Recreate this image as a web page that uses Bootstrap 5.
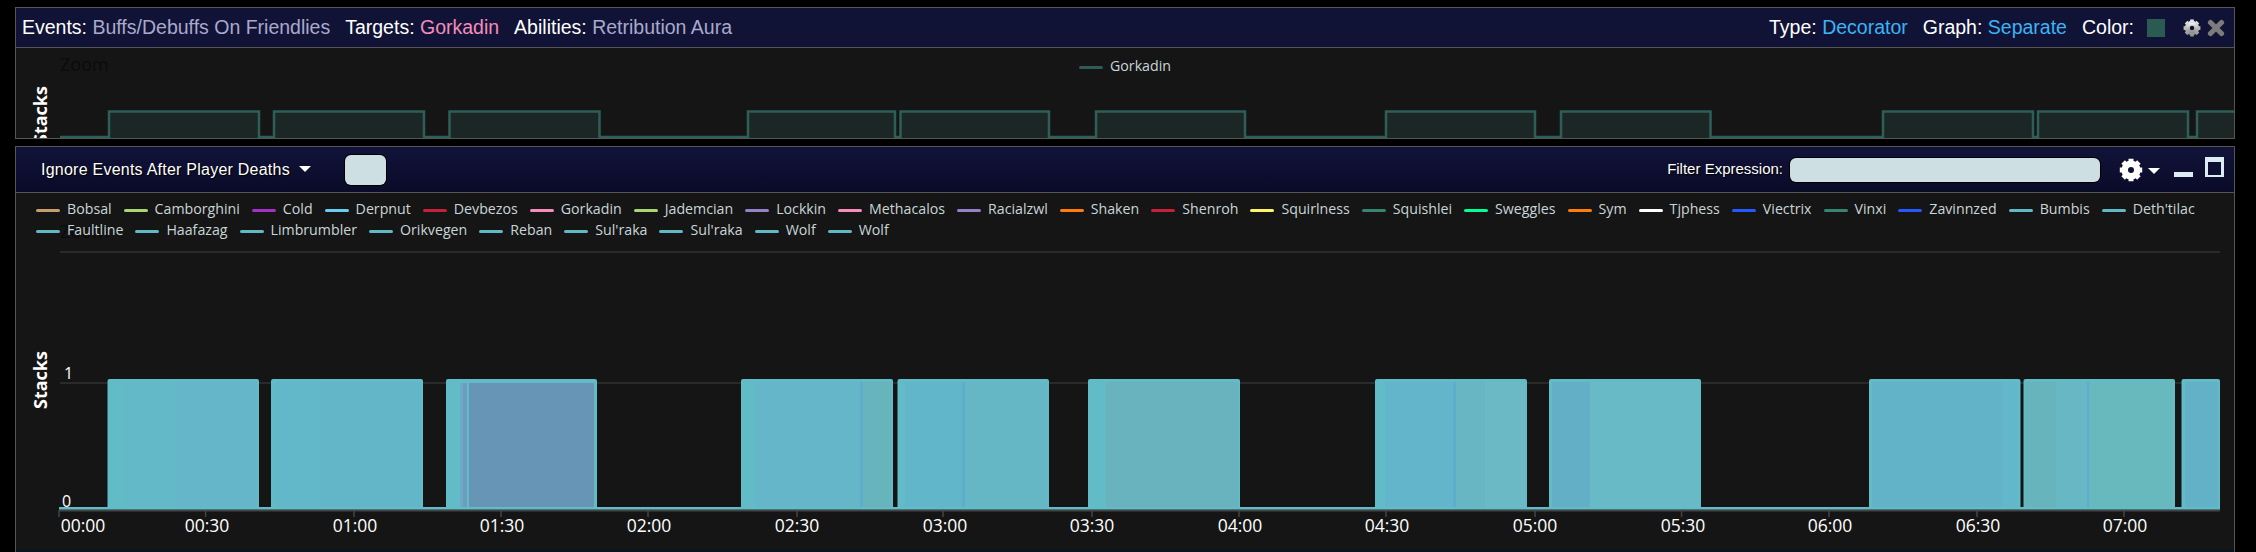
<!doctype html>
<html lang="en">
<head>
<meta charset="utf-8">
<title>Events</title>
<link rel="stylesheet" href="https://cdn.jsdelivr.net/npm/bootstrap@5.3.0/dist/css/bootstrap.min.css">
<style>
html,body{height:552px;overflow:hidden}
body{background:#000;color:#fff;font-family:"Liberation Sans",Arial,sans-serif;padding:7px 21px 0 15px}
.pane{border:1px solid #555;background:#151515;border-radius:0}
.pane + .pane{margin-top:7px;border-bottom:0}
.pane-head{background:#111336;border-bottom:1px solid #555;height:40px;padding:0 9px 0 6px;font-size:19.5px}
.pane-head2{background:linear-gradient(#11133a,#0a0b28);height:46px;padding:0 10px 0 0;font-size:16px}
.group{margin-right:15px}
.val{color:#a9a9cc}
.val-pink{color:#f58cba}
.val-blue{color:#3bb3f5}
.swatch{width:18px;height:18px;background:#2a5a52;margin:0 18px 0 13px}
.drop{color:#fff;font-size:16px;border:0;padding:0;margin-left:25px;text-shadow:1px 1px 1px #000;border-radius:0;letter-spacing:.24px}
.drop:hover{color:#fff}
.drop::after{margin-left:9px;vertical-align:.15em;border-top-width:6px;border-right-width:6px;border-left-width:6px}
.blank-btn{width:41px;height:30px;background:#cddfe2;border-radius:6px;margin-left:34px;box-shadow:0 0 0 1px #000}
.filter-label{font-size:15px;margin-right:7px;text-shadow:1px 1px 1px #000}
.filter-box{width:310px;height:24px;background:#cddfe2;border-radius:6px;box-shadow:0 0 0 1px #000}
.tool{display:block}
.tool-x{margin-left:6px}
.tool-gap1{margin-left:19px}
.tool-gap2{margin-left:14px}
.tool-gap3{margin-left:12px;margin-bottom:5px}
.care{width:0;height:0;border-left:6px solid transparent;border-right:6px solid transparent;border-top:6px solid #fff;margin-left:5px;margin-top:2px}
.plot{position:relative;overflow:hidden}
.plot svg{display:block}
.plot1{height:90px}
.plot2{height:357px}
.legend-box{position:absolute;left:20px;top:6px;width:2190px;column-gap:12px;row-gap:1px;font:14.2px/20px "Open Sans",sans-serif;color:#c9d5d8}
.legend-top{position:absolute;left:1063px;top:8px;font:14.2px/20px "Open Sans",sans-serif;color:#c9d5d8}
.leg{white-space:nowrap;display:flex;align-items:center}
.dash{display:block;width:24px;height:3px;border-radius:2px;margin-right:7px;margin-top:3px}
.c-war{background:#c79c6e}.c-dru{background:#abd473}.c-dk{background:#a330c9}.c-mag{background:#69ccf0}
.c-red{background:#c41f3b}.c-pal{background:#f58cba}.c-loc{background:#9482c9}.c-org{background:#ff7d0a}
.c-yel{background:#fff569}.c-sea{background:#358570}.c-grn{background:#00ff96}.c-wht{background:#fff}
.c-blu{background:#2459ff}.c-tea{background:#62b9c6}.c-dec{background:#2f5a55}
.axis{font:17.5px "Open Sans",sans-serif;fill:#fff}
.ylab{font:16px "Open Sans",sans-serif;fill:#fff}
.ttl{font:700 18px "Open Sans",sans-serif;fill:#fff}
.zoomword{font:18px "Open Sans",sans-serif;fill:#0b0b0b}
.tail{height:2px;background:#07151e}
</style>
</head>
<body>
<svg width="0" height="0" class="position-absolute">
  <defs>
    <linearGradient id="gy" x1="0" y1="0" x2="0" y2="1"><stop offset="0" stop-color="#eee"/><stop offset="1" stop-color="#8c8c8c"/></linearGradient>
    <linearGradient id="gx" x1="0" y1="0" x2="0" y2="1"><stop offset="0" stop-color="#8a8a8a"/><stop offset="1" stop-color="#5c5c5c"/></linearGradient>
    <g id="gearshape">
      <circle cx="12" cy="12" r="6.3" fill="none" stroke-width="6.6"/>
      <g stroke-width="5" stroke-linecap="butt">
        <path d="M12 .8V5M12 19v4.200M.8 12H5M19 12h4.200M4.100 4.100l3 3M16.900 16.900l3 3M19.900 4.100l-3 3M7.100 16.900l-3 3"/>
      </g>
    </g>
  </defs>
</svg>

<section class="card pane">
  <div class="pane-head d-flex align-items-center justify-content-between">
    <div class="d-flex">
      <span class="group">Events: <span class="val">Buffs/Debuffs On Friendlies</span></span>
      <span class="group">Targets: <span class="val-pink">Gorkadin</span></span>
      <span class="group">Abilities: <span class="val">Retribution Aura</span></span>
    </div>
    <div class="d-flex align-items-center">
      <span class="group">Type: <span class="val-blue">Decorator</span></span>
      <span class="group">Graph: <span class="val-blue">Separate</span></span>
      <span>Color:</span>
      <span class="swatch"></span>
      <svg class="tool" width="18" height="18" viewBox="0 0 24 24"><use href="#gearshape" stroke="url(#gy)"/></svg>
      <svg class="tool tool-x" width="18" height="18" viewBox="0 0 18 18"><path d="M3.500 3.500l11 11M14.500 3.500l-11 11" stroke="#7c7c7c" stroke-width="5.200" stroke-linecap="round" fill="none"/></svg>
    </div>
  </div>
  <div class="plot plot1">
    <svg width="2218" height="90" viewBox="16 48 2218 90">
      <path fill="#1c2625" d="M109 112h150v28H109zM274 112h150v28H274zM449 112h151v28H449zM748 112h147v28H748zM900 112h149v28H900zM1096 112h149v28h-149zM1386 112h149v28h-149zM1561 112h150v28h-150zM1883 112h150v28h-150zM2038 112h150v28h-150zM2197 112h37v28h-37z"/>
      <path fill="none" stroke="#2d5f59" stroke-width="2.500" d="M60 137H109V111.500H259V137H274V111.500H424V137H449.500V111.500H599.500V137H748V111.500H895V137H900.500V111.500H1049V137H1096V111.500H1245V137H1386V111.500H1535V137H1561V111.500H1710.500V137H1883V111.500H2033V137H2038V111.500H2188V137H2197V111.500H2234"/>
      <text class="zoomword" x="60" y="71">Zoom</text>
      <text class="ttl" transform="translate(47 115) rotate(-90)" text-anchor="middle">Stacks</text>
    </svg>
    <div class="legend-top leg"><span class="dash c-dec"></span>Gorkadin</div>
  </div>
</section>

<section class="card pane">
  <div class="pane-head pane-head2 d-flex align-items-center justify-content-between">
    <div class="d-flex align-items-center">
      <button type="button" class="btn drop dropdown-toggle">Ignore Events After Player Deaths</button>
      <span class="blank-btn"></span>
    </div>
    <div class="d-flex align-items-center">
      <span class="filter-label">Filter Expression:</span>
      <span class="filter-box"></span>
      <svg class="tool tool-gap1" width="24" height="24" viewBox="0 0 24 24"><use href="#gearshape" stroke="#fff"/></svg>
      <span class="care"></span>
      <svg class="tool tool-gap2" width="19" height="14" viewBox="0 0 19 14"><rect y="9" width="19" height="5" fill="#dcecf2"/></svg>
      <svg class="tool tool-gap3" width="19" height="20" viewBox="0 0 19 20"><path fill-rule="evenodd" fill="#dcecf2" d="M0 0h19v20H0zM3 5v13h13V5z"/></svg>
    </div>
  </div>
  <div class="plot plot2">
    <svg width="2218" height="357" viewBox="16 193 2218 357">
      <path stroke="#2a2a2a" stroke-width="2" d="M60 252H2220M60 383H2220"/>
      <path stroke="#444" stroke-width="2" d="M59 510.500H2220"/>
      <path stroke="#444" stroke-width="1.500" d="M59 510V517M205.600 510V517M354 510V517M501 510V517M648 510V517M797 510V517M943 510V517M1092 510V517M1239 510V517M1386 510V517M1535 510V517M1681.600 510V517M1829 510V517M1977 510V517M2124 510V517"/>
      <rect x="59" y="507" width="2161" height="2.500" fill="#5fbcc8"/>

      <g fill="#62bcc8">
        <rect x="107.500" y="379" width="151.500" height="130" rx="2"/>
        <rect x="271" y="379" width="152" height="130" rx="2"/>
        <rect x="446" y="379" width="151" height="130" rx="2"/>
        <rect x="741" y="379" width="152" height="130" rx="2"/>
        <rect x="897.500" y="379" width="151.500" height="130" rx="2"/>
        <rect x="1088" y="379" width="152" height="130" rx="2"/>
        <rect x="1375" y="379" width="152" height="130" rx="2"/>
        <rect x="1549" y="379" width="152" height="130" rx="2"/>
        <rect x="1869" y="379" width="151.500" height="130" rx="2"/>
        <rect x="2023.500" y="379" width="151.500" height="130" rx="2"/>
        <rect x="2181.500" y="379" width="38.500" height="130" rx="2"/>
      </g>
      <g>
        <rect x="125" y="382" width="50" height="125" fill="#64b9c8"/>
        <rect x="175" y="382" width="82" height="125" fill="#65b6c8"/>
        <rect x="275" y="382" width="45" height="125" fill="#62b8c8"/>
        <rect x="320" y="382" width="101" height="125" fill="#63b6c8"/>
        <rect x="460" y="383" width="3" height="124" fill="#6fa8c8"/>
        <rect x="463" y="383" width="4" height="124" fill="#6b9dbc"/>
        <rect x="469" y="383" width="125" height="124" fill="#6795b5"/>
        <rect x="755" y="382" width="105" height="125" fill="#65b6c8"/>
        <rect x="860" y="382" width="3" height="125" fill="#5fadcc"/>
        <rect x="863" y="382" width="28" height="125" fill="#68b4bc"/>
        <rect x="905" y="382" width="57" height="125" fill="#62b6ca"/>
        <rect x="962" y="382" width="3" height="125" fill="#5fadcc"/>
        <rect x="965" y="382" width="82" height="125" fill="#66b7c6"/>
        <rect x="1106" y="382" width="132" height="125" fill="#68b3bd"/>
        <rect x="1385" y="382" width="68" height="125" fill="#62b5ca"/>
        <rect x="1453" y="382" width="3" height="125" fill="#5fadcc"/>
        <rect x="1456" y="382" width="29" height="125" fill="#68b6c4"/>
        <rect x="1485" y="382" width="40" height="125" fill="#6ab9c4"/>
        <rect x="1552" y="382" width="38" height="125" fill="#62afc6"/>
        <rect x="1590" y="382" width="109" height="125" fill="#68bac6"/>
        <rect x="1872" y="382" width="130" height="125" fill="#63b3c8"/>
        <rect x="2002" y="382" width="16" height="125" fill="#63b7ca"/>
        <rect x="2025" y="382" width="31" height="125" fill="#68b4bd"/>
        <rect x="2056" y="382" width="31" height="125" fill="#67b7c4"/>
        <rect x="2087" y="382" width="2.500" height="125" fill="#5fadcc"/>
        <rect x="2089.500" y="382" width="84" height="125" fill="#68b9bd"/>
        <rect x="2185" y="382" width="33" height="125" fill="#62b1c6"/>
      </g>

      <text class="zoomword" x="60" y="238">Zoom</text>
      <text class="ttl" transform="translate(47 380) rotate(-90)" text-anchor="middle">Stacks</text>
      <text class="ylab" x="64" y="379">1</text>
      <text class="ylab" x="62" y="507">0</text>
      <g class="axis" text-anchor="middle">
        <text x="83" y="532">00:00</text>
        <text x="207" y="532">00:30</text>
        <text x="355" y="532">01:00</text>
        <text x="502" y="532">01:30</text>
        <text x="649" y="532">02:00</text>
        <text x="797" y="532">02:30</text>
        <text x="945" y="532">03:00</text>
        <text x="1092" y="532">03:30</text>
        <text x="1240" y="532">04:00</text>
        <text x="1387" y="532">04:30</text>
        <text x="1535" y="532">05:00</text>
        <text x="1683" y="532">05:30</text>
        <text x="1830" y="532">06:00</text>
        <text x="1978" y="532">06:30</text>
        <text x="2125" y="532">07:00</text>
      </g>
    </svg>
    <div class="legend-box d-flex flex-wrap">
      <span class="leg"><span class="dash c-war"></span>Bobsal</span>
      <span class="leg"><span class="dash c-dru"></span>Camborghini</span>
      <span class="leg"><span class="dash c-dk"></span>Cold</span>
      <span class="leg"><span class="dash c-mag"></span>Derpnut</span>
      <span class="leg"><span class="dash c-red"></span>Devbezos</span>
      <span class="leg"><span class="dash c-pal"></span>Gorkadin</span>
      <span class="leg"><span class="dash c-dru"></span>Jademcian</span>
      <span class="leg"><span class="dash c-loc"></span>Lockkin</span>
      <span class="leg"><span class="dash c-pal"></span>Methacalos</span>
      <span class="leg"><span class="dash c-loc"></span>Racialzwl</span>
      <span class="leg"><span class="dash c-org"></span>Shaken</span>
      <span class="leg"><span class="dash c-red"></span>Shenroh</span>
      <span class="leg"><span class="dash c-yel"></span>Squirlness</span>
      <span class="leg"><span class="dash c-sea"></span>Squishlei</span>
      <span class="leg"><span class="dash c-grn"></span>Sweggles</span>
      <span class="leg"><span class="dash c-org"></span>Sym</span>
      <span class="leg"><span class="dash c-wht"></span>Tjphess</span>
      <span class="leg"><span class="dash c-blu"></span>Viectrix</span>
      <span class="leg"><span class="dash c-sea"></span>Vinxi</span>
      <span class="leg"><span class="dash c-blu"></span>Zavinnzed</span>
      <span class="leg"><span class="dash c-tea"></span>Bumbis</span>
      <span class="leg"><span class="dash c-tea"></span>Deth'tilac</span>
      <span class="leg"><span class="dash c-tea"></span>Faultline</span>
      <span class="leg"><span class="dash c-tea"></span>Haafazag</span>
      <span class="leg"><span class="dash c-tea"></span>Limbrumbler</span>
      <span class="leg"><span class="dash c-tea"></span>Orikvegen</span>
      <span class="leg"><span class="dash c-tea"></span>Reban</span>
      <span class="leg"><span class="dash c-tea"></span>Sul'raka</span>
      <span class="leg"><span class="dash c-tea"></span>Sul'raka</span>
      <span class="leg"><span class="dash c-tea"></span>Wolf</span>
      <span class="leg"><span class="dash c-tea"></span>Wolf</span>
    </div>
  </div>
  <div class="tail"></div>
</section>
<script src="https://cdn.jsdelivr.net/npm/bootstrap@5.3.0/dist/js/bootstrap.bundle.min.js"></script>
</body>
</html>
